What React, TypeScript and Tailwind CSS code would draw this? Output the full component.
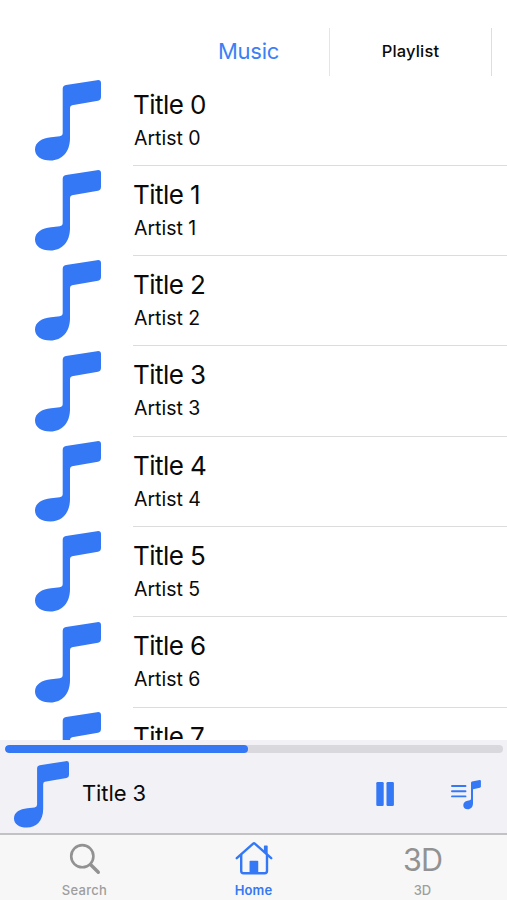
const NOTE =
  'M27.7 9 Q27.7 5.8 31 5.1 L62 .2 Q66 -.4 66 3 V17 Q66 20 63 20.7 L37 25.2 Q35 25.6 35 28 V58 C35 72 27 80.5 15.5 80.5 C6 80.5 0 76 0 69.5 C0 62 7 58.2 16 57.2 L24.7 56.2 Q27.7 55.8 27.7 53Z';

function Note({ className }: { className: string }) {
  return (
    <svg viewBox="0 0 66 81" className={className} fill="currentColor" preserveAspectRatio="none">
      <path d={NOTE} />
    </svg>
  );
}

function Row({ index }: { index: number }) {
  return (
    <li className="flex h-[90.3px] shrink-0 pl-[35px]">
      <Note className="mt-[4.4px] h-[81px] w-[66px] shrink-0 text-[#3478f6]" />
      <div className="ml-[32px] flex-1 border-b border-[#dcdcdd] pt-[13px]">
        <p className="text-[26px] leading-[32px] tracking-[-0.55px]">Title {index}</p>
        <p className="mt-[5px] pl-px text-[19.5px] leading-[24px]">Artist {index}</p>
      </div>
    </li>
  );
}

export default function App() {
  return (
    <div className="flex h-[900px] w-[507px] flex-col overflow-hidden bg-white font-['Inter',sans-serif] text-[#0a0a0a]">
      <header className="flex h-[75.5px] shrink-0 pt-[28px]">
        <button className="ml-[168px] w-[162px] border-r border-[#e5e5e6] text-[22px] tracking-[-0.3px] text-[#3c80f6]">Music</button>
        <button className="w-[162px] border-r border-[#dededf] text-[16.5px] font-medium tracking-[0.15px]">Playlist</button>
      </header>

      <ul className="flex h-[664.5px] shrink-0 flex-col overflow-hidden">
        {[0, 1, 2, 3, 4, 5, 6, 7].map((i) => (
          <Row key={i} index={i} />
        ))}
      </ul>

      <section className="h-[95px] shrink-0 border-b-2 border-[#c2c2c5] bg-[#f1f1f6]">
        <div className="px-[5px] pt-[5px]">
          <div className="h-[8px] w-[498px] overflow-hidden rounded-full bg-[#d8d8dd]">
            <div className="h-full w-[243px] rounded-full bg-[#3478f6]" />
          </div>
        </div>
        <div className="flex h-[80px] items-center pl-[14px] text-[#3478f6]">
          <Note className="mt-[2px] h-[67px] w-[55px] shrink-0" />
          <span className="ml-[13px] w-[294px] pt-px text-[22px] tracking-[-0.1px] text-[#0a0a0a]">Title 3</span>
          <svg viewBox="0 0 18 24" className="mt-px h-[24px] w-[18px]" fill="currentColor">
            <rect x="0.3" width="7.4" height="24" rx="1.3" />
            <rect x="10.5" width="7.4" height="24" rx="1.3" />
          </svg>
          <svg viewBox="0 0 30 30" className="mt-[3px] ml-[57px] h-[30px] w-[30px]" fill="currentColor">
            <path d="M1 6H14.5M1 11.2H14.5M1 16.4H14.5" stroke="currentColor" strokeWidth="1.9" strokeLinecap="round" />
            <path d="M20 3Q20 1.9 21 1.6L28.7 .1Q29.9 0 29.9 1.1V6.4Q29.9 7.4 28.8 7.7L22 9.2V23.2C22 27 19.8 29.2 16.7 29.2C14 29.2 12.3 27.6 12.3 25.2C12.3 22.7 14.1 21.2 16.6 20.7L18.7 20.3Q20 20 20 18.7Z" />
          </svg>
        </div>
      </section>

      <nav className="grid h-[65px] shrink-0 grid-cols-3 bg-[#f7f7f7] text-center text-[13px] font-medium text-[#9e9e9e]">
        <div className="flex flex-col items-center pt-[8px]">
          <svg viewBox="0 0 32 32" className="h-[32px] w-[32px]" fill="none" stroke="#929292">
            <circle cx="13.3" cy="13.2" r="11.1" strokeWidth="2.6" />
            <path d="M21.5 21.5L29.3 29.3" strokeWidth="3.4" strokeLinecap="round" />
          </svg>
          <span className="mt-[7px] leading-[16px] tracking-[0.3px]">Search</span>
        </div>
        <div className="flex flex-col items-center pt-[6px] text-[#3478f6]">
          <svg viewBox="0 0 38 34" className="h-[34px] w-[38px]" fill="none" stroke="currentColor" strokeLinecap="round" strokeLinejoin="round">
            <path d="M1.8 17.2L18.2 2.6Q19 1.9 19.8 2.6L36.2 17.2" strokeWidth="2.4" />
            <path d="M6.2 14V30Q6.2 32.2 8.5 32.2H29.7Q32 32.2 32 30V14" strokeWidth="2.4" />
            <path d="M29.6 5.2H32V12.5L29.6 10.4Z" fill="currentColor" strokeWidth="1.4" />
            <path d="M15.3 20.6H22.5V31.5H15.3Z" fill="currentColor" strokeWidth="1.5" />
          </svg>
          <span className="mt-[7px] leading-[16px] font-semibold tracking-[0.1px]">Home</span>
        </div>
        <div className="flex flex-col items-center pt-[8px]">
          <span className="text-[30.5px] leading-[34px] font-normal tracking-[-0.9px] text-[#929292]">3D</span>
          <span className="mt-[5px] leading-[16px]">3D</span>
        </div>
      </nav>
    </div>
  );
}
